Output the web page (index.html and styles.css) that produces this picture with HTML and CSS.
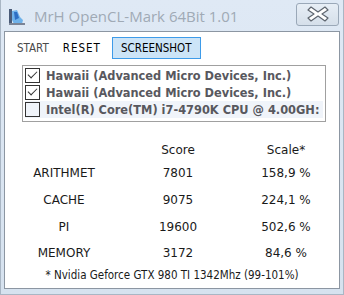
FILE: index.html
```html
<!DOCTYPE html>
<html>
<head>
    <title>MrH OpenCL-Mark 64Bit 1.01</title>
    <meta charset="UTF-8">
    <link rel="stylesheet" href="styles.css">
</head>
<body>
    <div class="window">
        <div class="titlebar">
            <svg class="app-icon" width="18" height="18" viewBox="0 0 18 18">
                <rect x="1" y="1" width="3" height="15" fill="#4a5b78"/>
                <path d="M4 3 L9 2 L12 9 L15 12 L14 16 L6 16 L4 12 Z" fill="#6fb2ea"/>
                <path d="M6 4 L9 4 L11 10 L7 12 Z" fill="#2e6fc4"/>
                <rect x="1" y="15" width="16" height="2" fill="#7b8496"/>
            </svg>
            <span class="title">MrH OpenCL-Mark 64Bit 1.01</span>
            <div class="close">
                <svg width="24" height="18" viewBox="0 0 24 18">
                    <path d="M5 2 L12 7 L19 2 L22 5 L16 9 L22 13 L19 16 L12 11 L5 16 L2 13 L8 9 L2 5 Z" fill="#ffffff" stroke="#5f6670" stroke-width="1.2" stroke-linejoin="round"/>
                </svg>
            </div>
        </div>
        <div class="client">
            <div class="menu">
                <span class="menu-item disabled">START</span>
                <span class="menu-item wide">RESET</span>
                <span class="menu-item active">SCREENSHOT</span>
            </div>

            <div class="device-list">
                <div class="device"><span class="check on"></span>Hawaii (Advanced Micro Devices, Inc.)</div>
                <div class="device"><span class="check on"></span>Hawaii (Advanced Micro Devices, Inc.)</div>
                <div class="device selected"><span class="check"></span>Intel(R) Core(TM) i7-4790K CPU @ 4.00GH:</div>
            </div>

            <table class="results">
                <tr class="head"><th></th><th>Score</th><th>Scale*</th></tr>
                <tr><td>ARITHMET</td><td>7801</td><td>158,9 %</td></tr>
                <tr><td>CACHE</td><td>9075</td><td>224,1 %</td></tr>
                <tr><td>PI</td><td>19600</td><td>502,6 %</td></tr>
                <tr><td>MEMORY</td><td>3172</td><td>84,6 %</td></tr>
            </table>

            <p class="note">* Nvidia Geforce GTX 980 TI 1342Mhz (99-101%)</p>
        </div>
    </div>
</body>
</html>
```

FILE: styles.css
```css
body {
    margin: 0;
    background-color: #d9e4f0;
    font-family: Tahoma, "DejaVu Sans", sans-serif;
}
.window {
    width: 344px;
    height: 295px;
    box-sizing: border-box;
    background: linear-gradient(#dfe9f5, #d6e2ef);
    border: 1px solid #a9b6c4;
    border-top: none;
    padding: 0 3px 5px 3px;
    display: flex;
    flex-direction: column;
}
.titlebar {
    height: 31px;
    display: flex;
    align-items: center;
    padding-left: 4px;
}
.app-icon {
    margin-right: 8px;
    margin-top: 2px;
}
.title {
    font-family: "Open Sans", sans-serif;
    font-size: 15px;
    color: #a0aab5;
    flex: 1;
}
.close {
    width: 41px;
    height: 21px;
    margin-right: 1px;
    margin-top: -3px;
    border: 1px solid #9aa8b8;
    border-radius: 3px;
    background: linear-gradient(#e7eef6, #d5dfea);
    display: flex;
    align-items: center;
    justify-content: center;
}
.client {
    flex: 1;
    background-color: white;
    border: 1px solid #8c96a2;
}
.menu {
    display: flex;
    align-items: center;
    height: 25px;
    padding: 3px 0 0 5px;
}
.menu-item {
    font-size: 11.5px;
    font-family: "DejaVu Sans", sans-serif;
    font-stretch: condensed;
    color: #000;
    padding: 3px 6px;
    border: 1px solid transparent;
}
.menu-item.disabled {
    color: #4a4a4a;
}
.menu-item.wide {
    letter-spacing: 1px;
    margin-right: 4px;
}
.menu-item.active {
    background-color: #cce4f7;
    border-color: #3d9be9;
    padding: 3px 8px;
}
.device-list {
    margin: 5px 0 0 17px;
    width: 298px;
    border: 1px solid #a0a0a0;
    padding: 1px 2px 3px 2px;
}
.device {
    height: 17px;
    display: flex;
    align-items: center;
    font-family: "DejaVu Sans", sans-serif;
    font-weight: bold;
    font-size: 11.4px;
    color: #58585e;
    white-space: nowrap;
    overflow: hidden;
}
.device.selected {
    background-color: #f0f4fa;
}
.check {
    width: 13px;
    height: 13px;
    border: 1px solid #333;
    margin-right: 6px;
    flex-shrink: 0;
    position: relative;
}
.check.on::after {
    content: "";
    position: absolute;
    left: 2px;
    top: 2px;
    width: 8px;
    height: 4px;
    border-left: 1.5px solid #333;
    border-bottom: 1.5px solid #333;
    transform: rotate(-45deg);
}
.results {
    margin: 17px 0 0 0;
    width: 100%;
    border-collapse: collapse;
    font-family: "DejaVu Sans", sans-serif;
    font-size: 12px;
    color: #1a1a1a;
}
.results th, .results td {
    font-weight: normal;
    text-align: center;
    height: 26.7px;
    padding: 0;
}
.results .head th {
    height: 21px;
}
.results th:nth-child(1), .results td:nth-child(1) {
    width: 118px;
}
.results th:nth-child(2), .results td:nth-child(2) {
    width: 110px;
}
.note {
    margin: 1px 0 0 0;
    text-align: center;
    font-family: "DejaVu Sans", sans-serif;
    font-stretch: condensed;
    font-size: 11.5px;
    color: #1a1a1a;
}
```
